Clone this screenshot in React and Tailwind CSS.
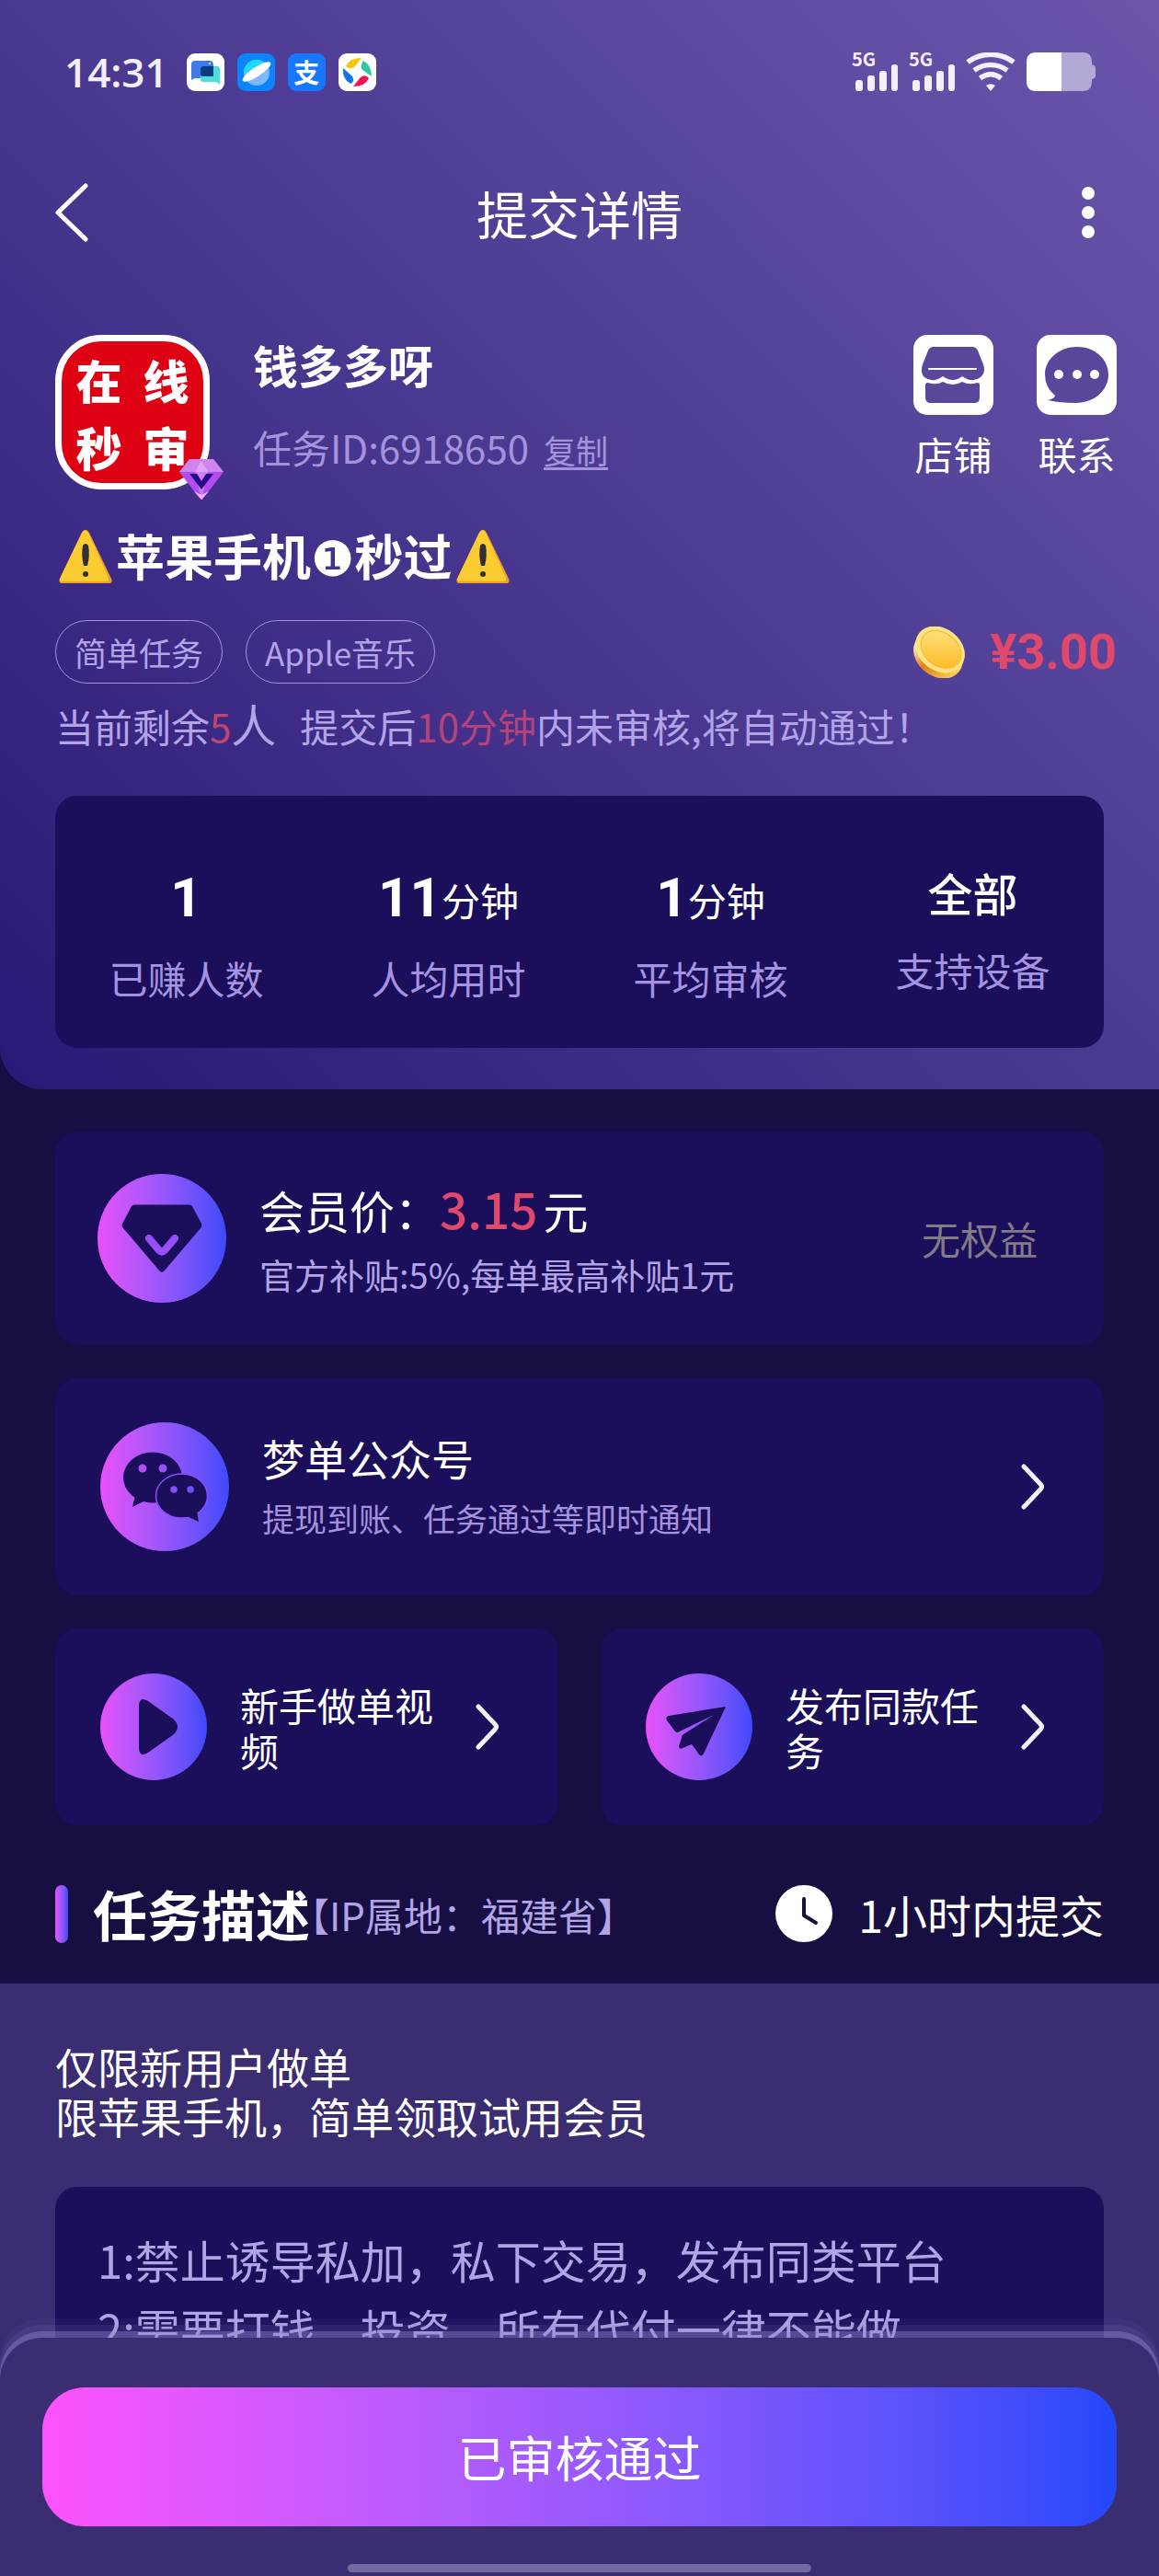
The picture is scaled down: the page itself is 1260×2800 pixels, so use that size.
import React from 'react';

const stats = [
  { value: '1', unit: '', label: '已赚人数' },
  { value: '11', unit: '分钟', label: '人均用时' },
  { value: '1', unit: '分钟', label: '平均审核' },
  { value: '', text: '全部', label: '支持设备' },
];

const tags = ['简单任务', 'Apple音乐'];

const rules = [
  '1:禁止诱导私加，私下交易，发布同类平台',
  '2:需要打钱，投资，所有代付一律不能做',
];

const SignalIcon = () => (
  <div className="flex flex-col h-[42px] w-[50px] justify-between">
    <span className="text-[20px] leading-[14px] font-bold">5G</span>
    <svg viewBox="0 0 50 29" className="w-[50px] h-[29px] -mt-2" fill="#f3effc">
      <rect x="4" y="17" width="8" height="12" rx="3" />
      <rect x="17" y="12" width="8" height="17" rx="3" />
      <rect x="30" y="7" width="8" height="22" rx="3" />
      <rect x="43" y="0" width="7" height="29" rx="3" />
    </svg>
  </div>
);

const WifiIcon = () => (
  <svg viewBox="0 0 54 42" className="w-[54px] h-[42px]" fill="none" stroke="#f3effc" strokeWidth="5.5">
    <path d="M2 10.5C17 -.5 37 -.5 52 10.5" />
    <path d="M9 19.500C20 11.500 34 11.500 45 19.500" />
    <path d="M15.500 28C23 22.500 31 22.500 38.500 28" />
    <path d="M22 36Q27 32.500 32 36L27 42Z" fill="#f3effc" stroke="none" />
  </svg>
);

const BatteryIcon = () => (
  <svg viewBox="0 0 75 42" className="w-[75px] h-[42px]">
    <path d="M37 0h24q10 0 10 11v2q4 1 4 4v8q0 3-4 4v2q0 11-10 11H37z" fill="#b4a9d6" />
    <path d="M38 0H10Q0 0 0 11v20q0 11 10 11h28z" fill="#fff" />
  </svg>
);

const AppBadges = () => (
  <div className="flex gap-[14px]">
    <svg viewBox="0 0 41 41" className="w-[41px] h-[41px]">
      <rect width="41" height="41" rx="9" fill="#fff" />
      <path d="M9 8h16q4 0 4 5v14H9l-4 2V12q0-4 4-4z" fill="#3f7be8" />
      <path d="M18 14h15q3 0 3 4v16l-4-3H18q-3 0-3-3V17q0-3 3-3z" fill="#4be0d6" />
      <path d="M18 14h11v11h-11q-3 0-3-2v-6q0-3 3-3z" fill="#0a3c86" />
      <circle cx="25" cy="11" r="1" fill="#fff" />
    </svg>
    <svg viewBox="0 0 41 41" className="w-[41px] h-[41px]">
      <rect width="41" height="41" rx="9" fill="#0a84ff" />
      <circle cx="21" cy="21" r="14" fill="#7cb8ff" />
      <path d="M7 22A14 14 0 0 1 31 11Z" fill="#1fd8fb" />
      <ellipse cx="21" cy="20" rx="18" ry="5" transform="rotate(-33 21 20)" fill="#fff" />
    </svg>
    <span className="w-[41px] h-[41px] rounded-[9px] bg-[#1677ff] flex items-center justify-center text-[28px] leading-none font-bold text-white">支</span>
    <svg viewBox="0 0 41 41" className="w-[41px] h-[41px]">
      <rect width="41" height="41" rx="9" fill="#fff" />
      <path d="M8 14Q12 5 25 5L17 15Q12 18 8 14Z" fill="#f9c400" />
      <path d="M27 8Q36 13 36 25L26 18Q23 14 27 8Z" fill="#2fc8a0" />
      <path d="M33 27Q29 36 16 36L24 26Q29 22 33 27Z" fill="#f5114e" />
      <path d="M5 16Q4 28 13 33Q18 30 15 25Z" fill="#1273ea" />
    </svg>
  </div>
);

const WarningIcon = () => (
  <svg viewBox="0 0 58 58" className="w-[58px] h-[58px]" role="img" aria-label="warning">
    <path d="M25 3q4-6 8 0l24 50q2 5-3 5H4q-5 0-3-5z" fill="#e8a02c" />
    <path d="M25 3q4-6 7 0l22 49q1 4-3 4H4q-4 0-3-3z" fill="#fdcc33" />
    <path d="M26 17q3-4 6 0q2 10-1 22h-4q-3-12-1-22z" fill="#2f302f" />
    <circle cx="29" cy="48" r="3" fill="#2f302f" />
  </svg>
);

const GemBadge = () => (
  <svg viewBox="0 0 50 46" className="absolute -right-4 -bottom-3 w-[50px] h-[46px]">
    <path d="M12 1h26l11 14L26 45h-2L1 15z" fill="#b24bf2" />
    <path d="M12 1h26l11 14H1z" fill="#cf84ee" />
    <path d="M18 15h14L25 45z" fill="#cf7ef5" />
    <path d="M18 15L25 3l7 12z" fill="#dfa4f4" />
    <path d="M12 17h8l5 8 5-8h8L25 34z" fill="#240a86" />
    <path d="M17 36L25 45l8-9-8 4z" fill="#efb2fb" />
  </svg>
);

const CoinIcon = () => (
  <svg viewBox="0 0 58 56" className="w-[58px] h-[56px]">
    <defs>
      <linearGradient id="coin" x1="0" y1="0" x2="1" y2="1">
        <stop offset="0" stopColor="#ffe68c" />
        <stop offset="1" stopColor="#fdb515" />
      </linearGradient>
      <linearGradient id="coinEdge" x1="0" y1="0" x2="1" y2="0">
        <stop offset="0" stopColor="#fff1c4" />
        <stop offset="0.400" stopColor="#dd7f1c" />
        <stop offset="1" stopColor="#ffd24d" />
      </linearGradient>
    </defs>
    <ellipse cx="28" cy="31" rx="29" ry="23" transform="rotate(38 28 31)" fill="url(#coinEdge)" />
    <ellipse cx="30" cy="25" rx="29" ry="23" transform="rotate(38 30 25)" fill="#ffe383" />
    <ellipse cx="31" cy="25" rx="24" ry="18" transform="rotate(38 31 25)" fill="url(#coin)" stroke="#f6b93a" strokeWidth="1" />
  </svg>
);

const ShopIcon = () => (
  <svg viewBox="0 0 87 87" className="w-[87px] h-[87px]">
    <rect width="87" height="87" rx="15" fill="#fff" />
    <path d="M22 13h42q4 0 6 4l6 15q3 9-3 14q-9 7-20-1q-10 8-21 0q-11 8-20 1q-5-5-2-14l6-15q2-4 6-4z" fill="#5a479c" />
    <path d="M13 54q0-2 3-2q9 3 16-1q11 6 21 0q8 4 16 1q3 0 3 2v14q0 6-6 6H19q-6 0-6-6z" fill="#5a479c" />
    <path d="M17 37h51" stroke="#fff" strokeWidth="2" strokeLinecap="round" />
  </svg>
);

const ChatIcon = () => (
  <svg viewBox="0 0 87 87" className="w-[87px] h-[87px]">
    <rect width="87" height="87" rx="15" fill="#fff" />
    <path d="M44 13C63 13 78 26 78 43S63 74 42 74Q25 74 12 71Q20 69 20 66Q9 57 9 43C9 26 25 13 44 13z" fill="#5a479c" />
    <circle cx="24" cy="43" r="5" fill="#fff" />
    <circle cx="44" cy="43" r="5" fill="#fff" />
    <circle cx="63" cy="43" r="5" fill="#fff" />
  </svg>
);

const MemberIcon = () => (
  <svg viewBox="0 0 140 140" className="w-full h-full">
    <path d="M40 37h60l10 19-40 47-40-47z" fill="#1b0e5a" stroke="#1b0e5a" strokeWidth="7" strokeLinejoin="round" />
    <path d="M56 70l11 13q3 3 6 0l11-13" fill="none" stroke="#9650fb" strokeWidth="8" strokeLinecap="round" />
  </svg>
);

const WechatIcon = () => (
  <svg viewBox="0 0 140 140" className="w-full h-full" fill="#1b0e5a">
    <ellipse cx="57" cy="60" rx="32" ry="27.500" />
    <path d="M38 79l-3 13 12-6z" />
    <ellipse cx="88.500" cy="80" rx="28" ry="24" stroke="#864ffb" strokeWidth="1.500" />
    <path d="M94 102l13 6-2-12z" />
    <circle cx="46" cy="50" r="4.500" fill="#b04ff8" />
    <circle cx="68" cy="50" r="4.500" fill="#9a4ffb" />
    <circle cx="80" cy="73" r="3.800" fill="#8a4dfb" />
    <circle cx="98" cy="73" r="3.800" fill="#764dfb" />
  </svg>
);

const PlayIcon = () => (
  <svg viewBox="0 0 116 116" className="w-full h-full" fill="#1b0e5a">
    <path d="M42 36q0-12 10-6l28 20q8 8 0 16L52 86q-10 6-10-6z" />
  </svg>
);

const PlaneIcon = () => (
  <svg viewBox="0 0 116 116" className="w-full h-full" fill="#1b0e5a">
    <path d="M87 36L25 46q-4 1-2 5l9 12q2 2 5 0L74 45 41 66q-2 1-2 4l-3 9q0 4 4 2l10-4 8 11q3 3 5-1z" />
  </svg>
);

const Chevron = () => (
  <svg viewBox="0 0 26 50" className="w-[26px] h-[50px] shrink-0" fill="none" stroke="#f4f1fb" strokeWidth="5" strokeLinecap="round" strokeLinejoin="round">
    <path d="M3 3l18 19q3 3 0 6L3 47" />
  </svg>
);

const StatusBar = () => (
  <div className="flex items-center justify-between pt-[57px] pl-[70px] pr-[69px] text-[#f3effc]">
    <div className="flex items-center gap-[20px]">
      <span className="font-['Open_Sans'] text-[44px] leading-[42px] font-semibold">14:31</span>
      <AppBadges />
    </div>
    <div className="flex items-center gap-[12px]">
      <SignalIcon />
      <SignalIcon />
      <WifiIcon />
      <BatteryIcon />
    </div>
  </div>
);

const Header = () => (
  <header className="shrink-0 rounded-bl-[46px] bg-[linear-gradient(45deg,#2a1876_0%,#4c3a92_52%,#6b56ac_100%)] pb-[45px]">
    <StatusBar />

    {/* Nav bar */}
    <div className="mt-[90px] flex h-[84px] items-center justify-between pl-[60px] pr-[70px]">
      <button aria-label="返回">
        <svg viewBox="0 0 36 64" className="w-[36px] h-[64px]" fill="none" stroke="#fff" strokeWidth="5" strokeLinecap="round" strokeLinejoin="round">
          <path d="M33 3L3 32l30 29" />
        </svg>
      </button>
      <h1 className="text-[56px] leading-[84px]">提交详情</h1>
      <button aria-label="更多" className="flex w-[26px] flex-col items-end gap-[7px]">
        <span className="h-[14px] w-[14px] rounded-full bg-white" />
        <span className="h-[14px] w-[14px] rounded-full bg-white" />
        <span className="h-[14px] w-[14px] rounded-full bg-white" />
      </button>
    </div>

    {/* Publisher */}
    <div className="mt-[91px] flex items-start pl-[60px] pr-[46px]">
      <div className="relative">
        <div className="grid h-[168px] w-[168px] grid-cols-2 place-items-center rounded-[50px] border-[7px] border-white bg-[#de0013] px-[4px] py-[4px] text-[50px] leading-[72px] font-black">
          <span>在</span>
          <span>线</span>
          <span>秒</span>
          <span>审</span>
        </div>
        <GemBadge />
      </div>
      <div className="ml-[47px] flex-1">
        <h2 className="text-[49px] leading-[64px] font-bold">钱多多呀</h2>
        <p className="mt-[28px] text-[42px] leading-[60px] text-[#a493dc]">
          任务ID:6918650
          <button className="ml-[16px] text-[35px] leading-[40px] underline underline-offset-4">复制</button>
        </p>
      </div>
      <div className="flex gap-[47px]">
        <a href="#shop" className="flex flex-col items-center gap-[12px] text-[42px] leading-[60px]">
          <ShopIcon />
          店铺
        </a>
        <a href="#contact" className="flex flex-col items-center gap-[12px] text-[42px] leading-[60px]">
          <ChatIcon />
          联系
        </a>
      </div>
    </div>

    <div className="px-[60px]">
      <h2 className="mt-[36px] flex h-[74px] items-center gap-[4px] pl-[4px] text-[53px] leading-[74px] font-bold">
        <WarningIcon />
        <span>苹果手机<span className="font-['DejaVu_Sans'] font-normal">❶</span>秒过</span>
        <WarningIcon />
      </h2>

      <div className="mt-[32px] -mr-[14px] flex items-center">
        <ul className="flex flex-1 gap-[25px]">
          {tags.map((tag) => (
            <li key={tag} className="rounded-full border border-[#a493dc] px-[20px] text-[35px] leading-[67px] text-[#b3a4e8]">
              {tag}
            </li>
          ))}
        </ul>
        <CoinIcon />
        <span className="ml-[26px] font-['Roboto'] text-[54px] leading-[69px] font-bold text-[#e0486c]">¥3.00</span>
      </div>

      <p className="mt-[15px] h-[60px] text-[42px] leading-[56px] text-[#b3a4e8]">
        当前剩余<span className="text-[#c0446f]">5</span><span className="text-[49px]">人</span>
        <span className="ml-[26px]">提交后<span className="text-[#b5437a]">10分钟</span>内未审核,将自动通过！</span>
      </p>

      <dl className="mt-[47px] grid h-[274px] grid-cols-4 rounded-[24px] bg-[#1b0e5a] pt-[76px] text-center">
        {stats.map((s) => (
          <div key={s.label} className="flex flex-col">
            <dt className="order-2 mt-[14px] text-[42px] leading-[50px] text-[#a493e0]">{s.label}</dt>
            <dd className="order-1">
              {s.text ? (
                <span className="block pb-[16px] text-[49px] leading-[58px] font-medium">{s.text}</span>
              ) : (
                <span className="block leading-[70px]">
                  <span className="font-['Roboto'] text-[60px] font-bold">{s.value}</span>
                  <span className="text-[42px]">{s.unit}</span>
                </span>
              )}
            </dd>
          </div>
        ))}
      </dl>
    </div>
  </header>
);

const Shortcut = ({ href, label, icon }) => (
  <a href={href} className="flex flex-1 items-center rounded-[24px] bg-[#1b0e5a] py-[49px] pl-[49px] pr-[64px]">
    <span className="h-[116px] w-[116px] shrink-0 rounded-full bg-linear-to-r from-[#e850fa] to-[#3e49fa]">{icon}</span>
    <span className="ml-[36px] flex-1 text-[42px] leading-[49px]">{label}</span>
    <span className="ml-[20px]"><Chevron /></span>
  </a>
);

const App = () => {
  return (
    <div className="relative h-screen overflow-hidden bg-[#170e42] font-['Noto_Sans_CJK_SC',sans-serif] text-white">
      <main className="flex h-full flex-col overflow-y-auto [scrollbar-width:none]">
        <Header />

        <div className="shrink-0 px-[60px] pt-[46px]">
          <section className="flex h-[231px] items-center rounded-[24px] bg-[#1b0e5a] pl-[46px] pr-[72px]">
            <span className="h-[140px] w-[140px] shrink-0 rounded-full bg-linear-to-r from-[#e850fa] to-[#3e49fa]"><MemberIcon /></span>
            <div className="ml-[36px] flex-1">
              <p className="text-[49px] leading-[76px]">
                会员价：<span className="mr-[6px] text-[53px] font-medium text-[#e0486c]">3.15</span>元
              </p>
              <p className="text-[38px] leading-[64px] text-[#b3a4e8]">官方补贴:5%,每单最高补贴1元</p>
            </div>
            <span className="text-[42px] text-[#827b88]">无权益</span>
          </section>

          <a href="#official" className="mt-[37px] flex h-[236px] items-center rounded-[24px] bg-[#1b0e5a] pl-[49px] pr-[64px]">
            <span className="h-[140px] w-[140px] shrink-0 rounded-full bg-linear-to-r from-[#e850fa] to-[#3e49fa]"><WechatIcon /></span>
            <span className="ml-[36px] flex flex-1 flex-col">
              <span className="text-[46px] leading-[68px]">梦单公众号</span>
              <span className="text-[35px] leading-[64px] text-[#a493dc]">提现到账、任务通过等即时通知</span>
            </span>
            <Chevron />
          </a>

          <div className="mt-[36px] flex gap-[46px]">
            <Shortcut href="#guide" label="新手做单视频" icon={<PlayIcon />} />
            <Shortcut href="#publish" label="发布同款任务" icon={<PlaneIcon />} />
          </div>

          <div className="flex h-[172px] items-center pt-[20px]">
            <span className="h-[63px] w-[14px] rounded-full bg-linear-to-r from-[#e850fa] to-[#3e49fa]" />
            <h2 className="ml-[27px] text-[59px] leading-[80px] font-bold">任务描述</h2>
            <p className="flex-1 text-[42px] text-[#b3a4e8]">
              <span className="[font-feature-settings:'halt']">【</span>IP属地：福建省】
            </p>
            <svg viewBox="0 0 62 62" className="h-[62px] w-[62px]">
              <circle cx="31" cy="31" r="31" fill="#fff" />
              <path d="M31 15v18l13 8" fill="none" stroke="#170e42" strokeWidth="4" strokeLinecap="round" strokeLinejoin="round" />
            </svg>
            <span className="ml-[28px] text-[48px]">1小时内提交</span>
          </div>
        </div>

        <section className="flex-1 bg-[#3a2d72] px-[60px] pt-[62px]">
          <p className="text-[46px] leading-[54px]">仅限新用户做单<br />限苹果手机，简单领取试用会员</p>
          <ol className="mt-[51px] rounded-[24px] bg-[#1b0e5a] px-[46px] pt-[41px] pb-[300px] text-[49px] leading-[75px] text-[#b3a4e8]">
            {rules.map((rule) => (
              <li key={rule}>{rule}</li>
            ))}
          </ol>
        </section>
      </main>

      {/* Bottom action bar */}
      <footer className="absolute inset-x-0 bottom-0 rounded-t-[46px] bg-[#3a2d72] px-[46px] pt-[54px] pb-[4px] shadow-[0_-7px_0_rgba(150,135,210,0.4),0_-14px_0_rgba(130,115,190,0.15),0_-21px_0_rgba(130,115,190,0.08)]">
        <button className="h-[151px] w-full rounded-[46px] bg-linear-to-r from-[#fd52fd] to-[#2248fa] text-[53px]">已审核通过</button>
        <div className="mx-auto mt-[41px] h-[9px] w-[504px] rounded-full bg-[#7368a0]" />
      </footer>
    </div>
  );
};

export default App;
